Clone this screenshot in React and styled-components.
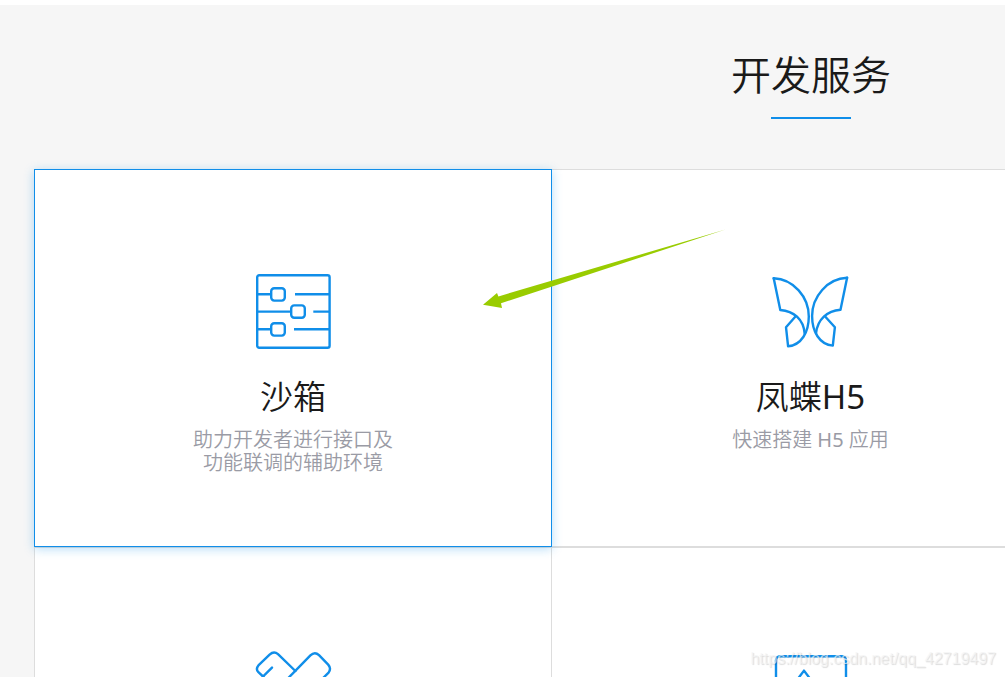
import React from 'react'
import styled, { createGlobalStyle, css } from 'styled-components'

const blue = '#108ee9'

const GlobalStyle = createGlobalStyle`
  * {
    box-sizing: border-box;
  }

  body {
    margin: 0;
    background-color: #fff;
    font-family: 'Noto Sans', 'Noto Sans CJK SC', sans-serif;
    font-weight: 350;
  }
`

const Page = styled.div`
  position: relative;
  height: 100vh;
  padding-top: 5px;
  overflow: hidden;
`

const Section = styled.section`
  width: max-content;
  min-width: 100%;
  padding: 40px 34px 80px;
  background-color: #f6f6f6;
`

const Heading = styled.h2`
  display: flex;
  flex-direction: column;
  align-items: center;
  margin: 0 0 50px;
  color: #1a1a1a;
  font-size: 40px;
  font-weight: 350;
  line-height: 60px;

  &::after {
    content: '';
    width: 80px;
    height: 2px;
    margin-top: 12px;
    background-color: ${blue};
  }
`

const Grid = styled.div`
  display: grid;
  grid-template-columns: repeat(3, 518px);
  justify-content: center;
`

const Card = styled.a`
  display: flex;
  flex-direction: column;
  align-items: center;
  min-height: 378px;
  margin-left: -1px;
  padding: 104px 40px 40px;
  border: 1px solid #ddd;
  background-color: #fff;
  color: #1a1a1a;
  text-align: center;
  text-decoration: none;

  &:nth-child(3n + 1) {
    margin-left: 0;
  }

  ${({ $active }) =>
    $active &&
    css`
      position: relative;
      z-index: 1;
      border-color: ${blue};
      box-shadow: 0 2px 10px rgba(16, 142, 233, 0.3);
    `}
`

const Icon = styled.svg`
  width: 76px;
  height: 76px;
  overflow: visible;
  fill: none;
  stroke: ${blue};
  stroke-width: 2.4;
  stroke-linecap: round;
  stroke-linejoin: round;
`

const CardTitle = styled.h3`
  margin: 24px 0 8px;
  font-size: 33px;
  font-weight: 350;
  line-height: 46px;
`

const Description = styled.p`
  margin: 0;
  color: #9a9ba5;
  font-size: 20px;
  line-height: 23px;
  white-space: pre-line;
`

const Latin = styled.span`
  font-weight: 400;
`

const Arrow = styled.svg`
  position: absolute;
  z-index: 2;
  top: 229px;
  left: 483px;
  width: 243px;
  height: 80px;
  fill: #9c0;
  pointer-events: none;
`

const Watermark = styled.span`
  position: absolute;
  z-index: 2;
  right: 9px;
  bottom: 9px;
  color: rgba(244, 244, 244, 0.7);
  font-family: 'Liberation Sans', sans-serif;
  font-size: 16px;
  font-weight: 400;
  line-height: 18px;
  text-shadow: 1px 1px 1px rgba(0, 0, 0, 0.14);
`

const SandboxIcon = () => (
  <Icon viewBox="0 0 76 76" aria-hidden="true">
    <rect x="2.2" y="1.3" width="72.4" height="72.4" rx="2" />
    <rect x="16.2" y="14.2" width="13.6" height="12.4" rx="3" />
    <rect x="36.2" y="31.4" width="13.6" height="12.4" rx="3" />
    <rect x="16.2" y="49.2" width="13.6" height="12.4" rx="3" />
    <path
      strokeLinecap="butt"
      d="M2 20.2h14M40 20.2h34M2 37.6h34M58.3 37.6H74M2 55.2h14M39 55.2h35"
    />
  </Icon>
)

const ButterflyIcon = () => (
  <Icon viewBox="0.5 0 76 76" aria-hidden="true">
    <path d="M1.2 4.2C21 5 36.3 23 36.3 42.5C36.3 58 29 71 15.6 72.3L13.5 53.2L23.2 42.2" />
    <path d="M1.2 4.2L7.8 36C21 37 31 45 32.2 59.8" />
    <path d="M74.6 3.8C54.8 4.6 39.6 22.6 39.6 42C39.6 57.6 47 70.6 60.3 71.6L62.4 53.2L52.4 42.2" />
    <path d="M74.6 3.8L68 35.8C54.8 37 45 45 43.5 59.4" />
  </Icon>
)

const ToolsIcon = () => (
  <Icon viewBox="0 0 76 76" aria-hidden="true">
    <path d="M8 24.5L3.4 20.2Q.4 17 3.4 13.4L14.6 2.6Q19-1.4 23 2.2L40.4 19" />
    <path d="M8 24.5L17 15.6M8 24.5L26 42" />
    <path d="M6 54L55.4 3.4Q59.8-.8 64 3.2L73.2 12.6Q76.6 16.6 73.6 20.6L22 72" />
  </Icon>
)

const BoardIcon = () => (
  <Icon viewBox="0.5 0 76 76" aria-hidden="true">
    <rect x="3.5" y="4.2" width="70" height="66" rx="4" />
    <path d="M20 34L31.5 18.6L43 34" />
  </Icon>
)

const services = [
  {
    title: '沙箱',
    description: '助力开发者进行接口及\n功能联调的辅助环境',
    icon: SandboxIcon,
    active: true,
  },
  {
    title: (
      <>
        凤蝶<Latin>H5</Latin>
      </>
    ),
    description: (
      <>
        快速搭建<Latin> H5 </Latin>应用
      </>
    ),
    icon: ButterflyIcon,
  },
  {},
  { icon: ToolsIcon },
  { icon: BoardIcon },
  {},
]

const ServiceCard = ({ title, description, icon: IconGlyph, active }) => (
  <Card href="#" $active={active}>
    {IconGlyph && <IconGlyph />}
    {title && <CardTitle>{title}</CardTitle>}
    {description && <Description>{description}</Description>}
  </Card>
)

const App = () => {
  return (
    <>
      <GlobalStyle />
      <Page>
        <Section>
          <Heading>开发服务</Heading>
          <Grid>
            {services.map((service, index) => (
              <ServiceCard key={index} {...service} />
            ))}
          </Grid>
        </Section>
        <Arrow viewBox="0 0 243 80" aria-hidden="true">
          <path d="M0 75.7L14 64L15.4 67.4L242.5 .5L18 74.2L19 79Z" />
        </Arrow>
        <Watermark>https://blog.csdn.net/qq_42719497</Watermark>
      </Page>
    </>
  )
}

export default App
